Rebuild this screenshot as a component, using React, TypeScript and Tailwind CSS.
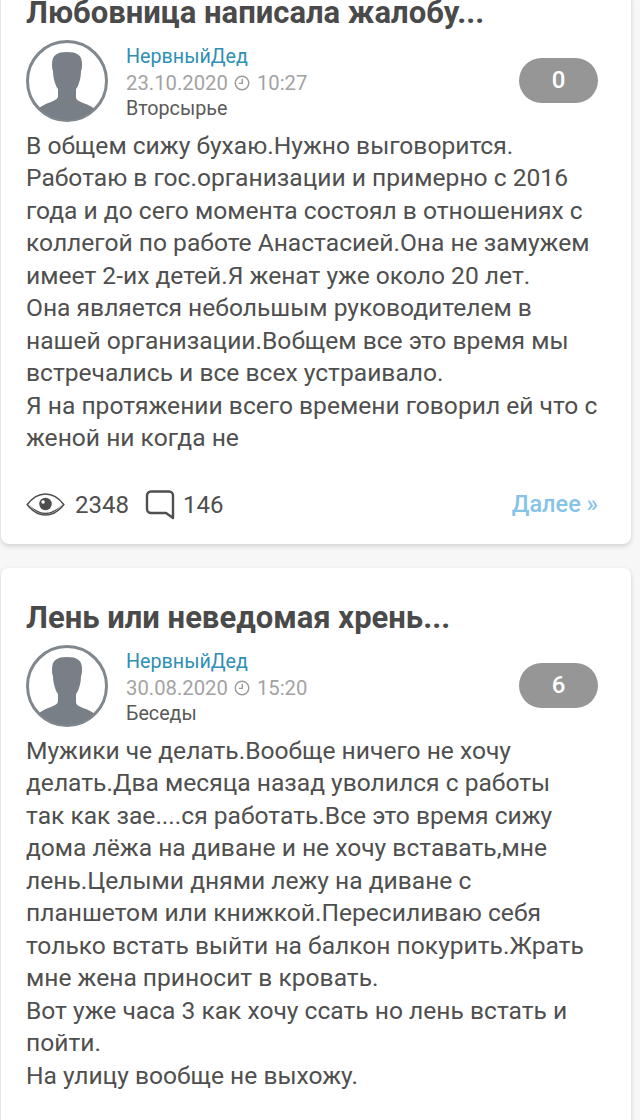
const Avatar = () => (
  <svg viewBox="0 0 82 82" className="w-[82px] h-[82px] shrink-0">
    <defs>
      <clipPath id="c"><circle cx="41" cy="41" r="39" /></clipPath>
    </defs>
    <circle cx="41" cy="41" r="39.500" fill="#fff" stroke="#80878d" strokeWidth="3" />
    <g clipPath="url(#c)" fill="#787f86">
      <path d="M41 12c-10 0-15 3-15 12 0 3 0 5 1 7 0 5 1 9 2 12 1 3 2 5 3 6v7c0 3-3 4-7 6-6 2-10 4-13 7v13h58V70c-3-3-7-5-13-7-4-2-7-3-7-6v-8c1-1 2-3 3-6 1-3 2-7 2-12 1-2 1-4 1-7 0-9-5-12-15-12z" />
    </g>
  </svg>
);

const Clock = () => (
  <svg viewBox="0 0 16 16" className="w-[16px] h-[16px] mx-[6.500px]" fill="none" stroke="#9a9a9a" strokeWidth="1.4">
    <circle cx="8" cy="8" r="6.800" />
    <path d="M8.300 3.800v4.600H4.800" />
  </svg>
);

const Eye = () => (
  <svg viewBox="0 0 40 26" className="w-[39px] h-[25px]" fill="none">
    <path d="M1 13C7 5 13 2 20 2s13 3 19 11c-6 8-12 11-19 11S7 21 1 13z" stroke="#4d4d4d" strokeWidth="1.600" />
    <path d="M3 13C9 21 14 23 20 23s11-2 17-10c-6 6-11 8.500-17 8.500S9 19 3 13z" fill="#4d4d4d" />
    <circle cx="20" cy="12.500" r="6.500" fill="#4d4d4d" />
    <circle cx="17.500" cy="10.500" r="1.800" fill="#fff" />
  </svg>
);

const Bubble = () => (
  <svg viewBox="0 0 30 30" className="w-[30px] h-[30px]" fill="none" stroke="#4f4f4f" strokeWidth="2.400" strokeLinejoin="round">
    <path d="M6 1.500h18a4 4 0 0 1 4 4V28l-7-5H6a4 4 0 0 1-4-4V5.500a4 4 0 0 1 4-4z" />
  </svg>
);

type Post = {
  title: string;
  date: string;
  time: string;
  section: string;
  count: string;
  lines: string[];
};

const Card = ({ post, first, footer }: { post: Post; first?: boolean; footer?: boolean }) => (
  <article
    className={`mx-[1px] w-[630px] bg-white rounded-[8px] px-[25px] shadow-[0_2px_5px_rgba(0,0,0,0.16)] ${first ? "-mt-[8px] pt-0 h-[552px]" : "mt-[24px] pt-[29px] h-[600px]"}`}
  >
    <h2 className="text-[31px] leading-[42px] font-bold text-[#4a4a4a] whitespace-nowrap">{post.title}</h2>
    <div className="flex items-center mt-[6px]">
      <Avatar />
      <div className="ml-[18px] flex flex-col text-[19.700px] leading-[26px] mt-[4px]">
        <span className="text-[#2f8fb5]">НервныйДед</span>
        <span className="flex items-center text-[#a3a3a3] text-[20.300px]">
          {post.date}
          <Clock />
          {post.time}
        </span>
        <span className="text-[#5a5a5a]">{post.section}</span>
      </div>
      <div className="ml-auto mr-[8px] -mt-[2px] w-[79px] h-[45px] rounded-full bg-[#969696] text-white text-[24px] font-medium flex items-center justify-center">
        {post.count}
      </div>
    </div>
    <div className="mt-[7.500px] text-[24.600px] leading-[32.500px] text-[#4f4f4f]">
      {post.lines.map((l) => (
        <div key={l} className="whitespace-nowrap">{l}</div>
      ))}
    </div>
    {footer && (
      <div className="flex items-center mt-[32px] text-[24px] text-[#4f4f4f]">
        <Eye />
        <span className="ml-[10px]">2348</span>
        <span className="ml-[16px]"><Bubble /></span>
        <span className="ml-[8px]">146</span>
        <span className="ml-auto mr-[8px] text-[#86c3e8] font-medium text-[23.500px]">Далее »</span>
      </div>
    )}
  </article>
);

const posts: Post[] = [
  {
    title: "Любовница написала жалобу...",
    date: "23.10.2020",
    time: "10:27",
    section: "Вторсырье",
    count: "0",
    lines: [
      "В общем сижу бухаю.Нужно выговорится.",
      "Работаю в гос.организации и примерно с 2016",
      "года и до сего момента состоял в отношениях с",
      "коллегой по работе Анастасией.Она не замужем",
      "имеет 2-их детей.Я женат уже около 20 лет.",
      "Она является небольшым руководителем в",
      "нашей организации.Вобщем все это время мы",
      "встречались и все всех устраивало.",
      "Я на протяжении всего времени говорил ей что с",
      "женой ни когда не",
    ],
  },
  {
    title: "Лень или неведомая хрень...",
    date: "30.08.2020",
    time: "15:20",
    section: "Беседы",
    count: "6",
    lines: [
      "Мужики че делать.Вообще ничего не хочу",
      "делать.Два месяца назад уволился с работы",
      "так как зае....ся работать.Все это время сижу",
      "дома лёжа на диване и не хочу вставать,мне",
      "лень.Целыми днями лежу на диване с",
      "планшетом или книжкой.Пересиливаю себя",
      "только встать выйти на балкон покурить.Жрать",
      "мне жена приносит в кровать.",
      "Вот уже часа 3 как хочу ссать но лень встать и",
      "пойти.",
      "На улицу вообще не выхожу.",
    ],
  },
];

export default function App() {
  return (
    <div className="w-[640px] h-[1120px] overflow-hidden bg-[#f7f7f7] font-['Roboto',sans-serif]">
      <Card post={posts[0]} first footer />
      <Card post={posts[1]} />
    </div>
  );
}
